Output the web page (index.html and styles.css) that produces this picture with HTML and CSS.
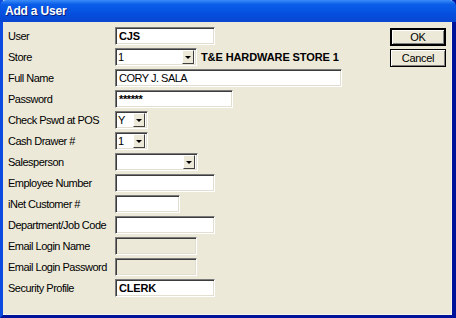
FILE: index.html
```html
<!DOCTYPE html>
<html lang="en">
<head>
	<meta charset="UTF-8">
	<title>Add a User</title>
	<link rel="stylesheet" href="styles.css">
</head>
<body>
	<div class="window">
		<div class="titlebar">Add a User</div>
		<div class="dialog">
			<div class="form">
				<div class="row">
					<label>User</label>
					<div class="field w100 bold">CJS</div>
				</div>
				<div class="row">
					<label>Store</label>
					<div class="combo w82"><span class="val">1</span><span class="arrow"></span></div>
					<span class="store-name">T&amp;E HARDWARE STORE 1</span>
				</div>
				<div class="row">
					<label>Full Name</label>
					<div class="field w227">CORY J. SALA</div>
				</div>
				<div class="row">
					<label>Password</label>
					<div class="field w118 pwd">******</div>
				</div>
				<div class="row">
					<label>Check Pswd at POS</label>
					<div class="combo w33"><span class="val">Y</span><span class="arrow"></span></div>
				</div>
				<div class="row">
					<label>Cash Drawer #</label>
					<div class="combo w33"><span class="val">1</span><span class="arrow"></span></div>
				</div>
				<div class="row">
					<label>Salesperson</label>
					<div class="combo w83"><span class="val"></span><span class="arrow"></span></div>
				</div>
				<div class="row">
					<label>Employee Number</label>
					<div class="field w100"></div>
				</div>
				<div class="row">
					<label>iNet Customer #</label>
					<div class="field w65"></div>
				</div>
				<div class="row">
					<label>Department/Job Code</label>
					<div class="field w100"></div>
				</div>
				<div class="row">
					<label>Email Login Name</label>
					<div class="field w82 disabled"></div>
				</div>
				<div class="row">
					<label>Email Login Password</label>
					<div class="field w82 disabled"></div>
				</div>
				<div class="row">
					<label>Security Profile</label>
					<div class="field w100 bold">CLERK</div>
				</div>
			</div>
			<div class="buttons">
				<button class="btn default">OK</button>
				<button class="btn">Cancel</button>
			</div>
		</div>
	</div>
</body>
</html>
```

FILE: styles.css
```css
* {
	margin: 0;
	padding: 0;
	box-sizing: border-box;
}
body {
	background-color: #ece9d8;
	font-family: "Liberation Sans", Arial, sans-serif;
	font-size: 11px;
	letter-spacing: -0.5px;
	color: #000;
}
.window {
	width: 456px;
	height: 318px;
	display: flex;
	flex-direction: column;
	background-color: #ece9d8;
	border-left: 3px solid #0b4be0;
	border-right: 4px solid #00129a;
	border-bottom: 3px solid #00129a;
}
.titlebar {
	height: 22px;
	margin-left: -3px;
	margin-right: -4px;
	padding: 4px 0 0 5px;
	border-radius: 6px 6px 0 0;
	background: linear-gradient(to bottom, #3a8cf8 0%, #0a5ee8 20%, #0550e0 60%, #0846d0 100%);
	color: #fff;
	font-weight: bold;
	font-size: 12px;
	letter-spacing: -0.2px;
	text-shadow: 1px 1px 0 #0a1e80;
}
.dialog {
	flex: 1;
	display: flex;
	padding: 5px 5px 0 5px;
	border-right: 1px solid #f6f5ee;
	border-bottom: 1px solid #f6f5ee;
}
.form {
	flex: 1;
	display: flex;
	flex-direction: column;
	gap: 3px;
}
.row {
	display: flex;
	align-items: center;
	height: 18px;
}
.row label {
	width: 107px;
	flex: none;
	white-space: nowrap;
}
.field,
.combo {
	height: 18px;
	flex: none;
	background-color: #fff;
	border-top: 1px solid #7a7a7a;
	border-left: 1px solid #7a7a7a;
	border-right: 1px solid #fff;
	border-bottom: 1px solid #fff;
	box-shadow: inset 1px 1px 0 #3c3c3c, inset -1px -1px 0 #e2dfd2;
	padding: 2px 0 0 3px;
	line-height: 13px;
	white-space: nowrap;
}
.field.bold {
	font-weight: bold;
	letter-spacing: -0.2px;
}
.field.pwd {
	font-size: 11px;
	font-weight: bold;
	letter-spacing: -0.4px;
}
.field.disabled {
	background-color: #ece9d8;
}
.w33 { width: 33px; }
.w65 { width: 65px; }
.w82 { width: 82px; }
.w83 { width: 83px; }
.w100 { width: 100px; }
.w118 { width: 118px; }
.w227 { width: 227px; }
.combo {
	display: flex;
	padding: 0 2px 0 2px;
	align-items: stretch;
}
.combo .val {
	flex: 1;
	padding-top: 2px;
}
.combo .arrow {
	width: 12px;
	margin: 1px 0;
	background-color: #ece9d8;
	border-top: 1px solid #fff;
	border-left: 1px solid #fff;
	border-right: 1px solid #404040;
	border-bottom: 1px solid #404040;
	display: flex;
	align-items: center;
	justify-content: center;
}
.combo .arrow::after {
	content: "";
	border-left: 3px solid transparent;
	border-right: 3px solid transparent;
	border-top: 3px solid #000;
}
.store-name {
	margin-left: 4px;
	font-weight: bold;
	font-size: 11px;
	letter-spacing: -0.1px;
	white-space: nowrap;
}
.buttons {
	display: flex;
	flex-direction: column;
	gap: 3px;
	padding-top: 1px;
}
.btn {
	width: 56px;
	height: 18px;
	font-family: "Liberation Sans", Arial, sans-serif;
	font-size: 11px;
	letter-spacing: -0.3px;
	background-color: #ece9d8;
	border: 1px solid #000;
	box-shadow: inset 1px 1px 0 #fff, inset -1px -1px 0 #808080;
	color: #000;
}
.btn.default {
	border: 2px solid #000;
}
```
